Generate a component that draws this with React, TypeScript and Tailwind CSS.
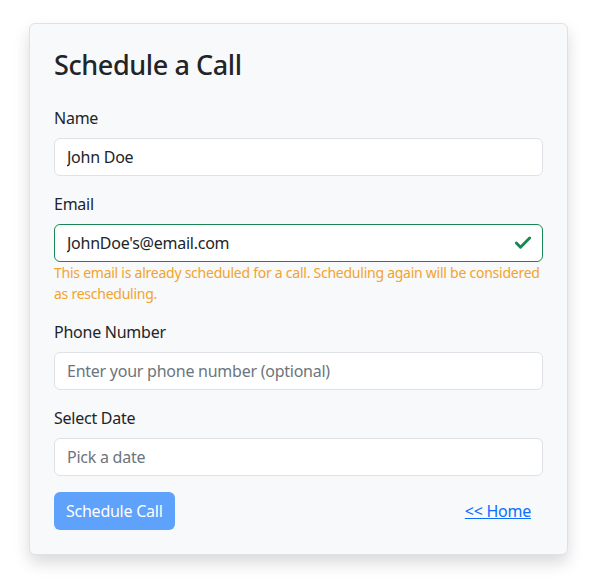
import { Check } from "lucide-react";

const font = { fontFamily: '"Noto Sans", "Liberation Sans", sans-serif' };

const baseCls =
  "block h-[38px] w-full rounded-md border bg-white px-3 text-[16px] tracking-[-0.25px] text-[#212529] outline-none placeholder:text-[#6c757d]";
const inputCls = baseCls + " border-[#dee2e6]";

function Field({
  label,
  children,
}: {
  label: string;
  children: React.ReactNode;
}) {
  return (
    <div className="mb-4">
      <label className="mb-2 block text-[16px] leading-6 text-[#212529]">{label}</label>
      {children}
    </div>
  );
}

export default function App() {
  return (
    <div className="min-h-[585px] bg-white pt-[23px] pl-[29px] tracking-[-0.25px]" style={font}>
      <div className="w-[539px] rounded-md border border-[#dfe1e4] bg-[#f8f9fa] p-6 shadow-[0_8px_16px_rgba(0,0,0,0.15)]">
        <h3 className="mb-6 text-[27px] font-medium leading-[34px] tracking-[-0.4px] text-[#212529]">
          Schedule a Call
        </h3>

        <Field label="Name">
          <input readOnly value="John Doe" className={inputCls} />
        </Field>

        <div className="mb-4">
          <label className="mb-2 block text-[16px] leading-6 text-[#212529]">Email</label>
          <div className="relative">
            <input
              readOnly
              value="JohnDoe's@email.com"
              className={baseCls + " border-[#198754] pr-10"}
            />
            <Check
              className="absolute right-[10px] top-1/2 h-5 w-5 -translate-y-1/2 text-[#198754]"
              strokeWidth={3.5}
            />
          </div>
          <p className="mt-0 text-[14px] leading-[21px] text-[#f2a32b]">
            This email is already scheduled for a call. Scheduling again will be considered as rescheduling.
          </p>
        </div>

        <Field label="Phone Number">
          <input placeholder="Enter your phone number (optional)" className={inputCls} />
        </Field>

        <Field label="Select Date">
          <input placeholder="Pick a date" className={inputCls} />
        </Field>

        <div className="flex items-center justify-between">
          <button
            disabled
            className="h-[38px] rounded-md bg-[#5ea2fb] px-3 text-[16px] text-white"
          >
            Schedule Call
          </button>
          <a href="#" className="px-3 text-[16px] text-[#0d6efd] underline">
            &lt;&lt; Home
          </a>
        </div>
      </div>
    </div>
  );
}
